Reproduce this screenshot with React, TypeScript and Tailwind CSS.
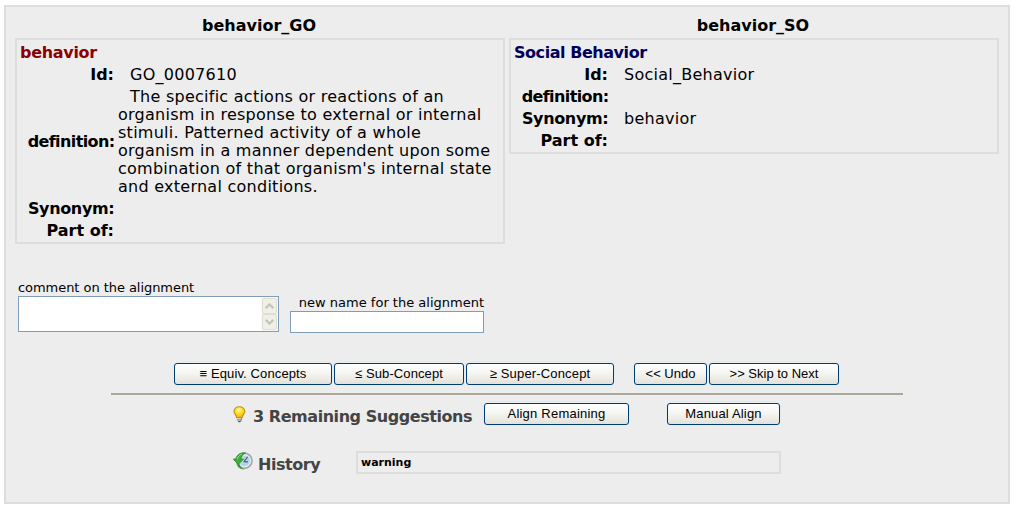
import type { ReactNode } from "react";

function Row({ label, tracking = "", children }: { label: string; tracking?: string; children?: ReactNode }) {
  return (
    <>
      <dt className={"self-center text-right font-bold " + tracking}>{label}</dt>
      <dd className="indent-3 tracking-[0.26px]">{children}</dd>
    </>
  );
}

function Concept({ ontology, title, color, children }: { ontology: string; title: string; color: string; children: ReactNode }) {
  return (
    <section className="w-[490px]">
      <h2 className="mb-[3px] pr-0.5 text-center font-bold">{ontology}</h2>
      <div className="border-2 border-[#dddddd] px-[3px] pb-0.5 pt-1">
        <h3 className={"mb-1 font-bold " + color}>{title}</h3>
        <dl className="grid grid-cols-[94px_1fr] gap-1">{children}</dl>
      </div>
    </section>
  );
}

function XpButton({ className, children }: { className: string; children: ReactNode }) {
  return (
    <button
      className={
        "h-[22px] shrink-0 whitespace-pre rounded-[3px] border border-[#003c74] bg-linear-to-b from-white via-[#f4f4f0] to-[#e3e1d8] pb-px text-center font-['Liberation_Sans',sans-serif] text-[13px] leading-[19px] text-black shadow-[0_0_1px_1px_#e2edf2] " +
        className
      }
    >
      {children}
    </button>
  );
}

function ScrollArrow({ up }: { up?: boolean }) {
  return (
    <span className="flex h-[16px] w-[15px] items-center justify-center rounded-[2px] border border-[#dfded3] bg-[#f1f0e8]">
      <svg width="9" height="6" viewBox="0 0 9 6" fill="none" stroke="#c5c4b8" strokeWidth="2.2">
        <path d={up ? "M.7 5.2 4.5 1.4 8.3 5.2" : "M.7.8 4.5 4.6 8.3.8"} />
      </svg>
    </span>
  );
}

function Bulb() {
  return (
    <svg width="13" height="17" viewBox="0 0 13 17">
      <defs>
        <radialGradient id="glass" cx=".45" cy=".3" r=".65">
          <stop offset="0" stopColor="#fffbc4" />
          <stop offset=".5" stopColor="#ffe21c" />
          <stop offset="1" stopColor="#f5b60c" />
        </radialGradient>
      </defs>
      <path d="M6.400.8C3.200.8 1 2.800 1 5.400c0 2.200 2.300 3.300 2.600 6.200h5.600c.3-2.900 2.600-4 2.600-6.200C11.800 2.800 9.600.8 6.400.8Z" fill="url(#glass)" stroke="#cf8a1c" strokeWidth="1.100" />
      <path d="M3.900 11.900h5v2.600l-1.300 1.300H5.200l-1.300-1.300Z" fill="#8c8c84" />
      <path d="M3.900 12.500h4M4 14.100h3.600" stroke="#e6e6df" strokeWidth=".8" />
      <path d="M5.300 15.700h2.200" stroke="#44443f" />
    </svg>
  );
}

function HistoryIcon() {
  return (
    <svg width="20" height="18" viewBox="0 0 20 18">
      <circle cx="11.500" cy="8.800" r="7.600" fill="#c8dce8" stroke="#a3a9ad" strokeWidth="1.600" />
      <circle cx="11.500" cy="8.800" r="5.900" fill="#b3d3e6" stroke="#eef4f7" strokeWidth=".9" />
      <path d="M11 9.500 14.700 4.800M10.600 9.700l4.400.1" stroke="#4e5f6b" strokeWidth="1.200" />
      <path d="M12.500.9C7.400.3 3.800 2.700 2.900 7H.3l4.900 5.600L10.400 7H7.700C8.100 4.400 9.700 2.500 12.500.9Z" fill="#3fae39" stroke="#24842a" strokeWidth=".8" />
      <path d="M3.300 11.200c1 4 4.100 6.400 8.200 6.200-3-1.100-4.600-3-5-5.600l-1.400 1.200Z" fill="#3b9a36" />
      <path d="M4.300 7.300c.6-2.800 2-4.400 4.600-5.200" stroke="#9be08d" fill="none" />
    </svg>
  );
}

export default function App() {
  return (
    <div className="h-[510px] w-[1028px] bg-white pl-1 pt-[5px] font-['DejaVu_Sans',Verdana,sans-serif] text-[16px] leading-[18px] text-black">
      <main className="h-[499px] w-[1006px] border-2 border-[#dddddd] bg-[#ededed]">
        <div className="flex h-[229px] items-start gap-1 pl-[9px] pt-2.5">
          <Concept ontology="behavior_GO" title="behavior" color="text-[#8b0000] tracking-[-0.3px]">
            <Row label="Id:">GO_0007610</Row>
            <Row label="definition:" tracking="tracking-[-0.6px] -mr-[0.6px]">
              The specific actions or reactions of an<br />
              organism in response to external or internal<br />
              stimuli. Patterned activity of a whole<br />
              organism in a manner dependent upon some<br />
              combination of that organism's internal state<br />
              and external conditions.
            </Row>
            <Row label="Synonym:" tracking="tracking-[-0.35px] -mr-[0.35px]" />
            <Row label="Part of:" />
          </Concept>
          <Concept ontology="behavior_SO" title="Social Behavior" color="text-[#00005c] tracking-[-0.45px]">
            <Row label="Id:">Social_Behavior</Row>
            <Row label="definition:" tracking="tracking-[-0.6px] -mr-[0.6px]" />
            <Row label="Synonym:" tracking="tracking-[-0.35px] -mr-[0.35px]">behavior</Row>
            <Row label="Part of:" />
          </Concept>
        </div>

        <div className="mt-11 flex pl-3 text-[13px] leading-4">
          <div className="w-[261px]">
            <div className="tracking-[-0.05px]">comment on the alignment</div>
            <div className="flex h-9 justify-end border border-[#7f9db9] bg-white">
              <div className="flex w-[17px] flex-col items-center justify-between bg-[#f8f8f4] py-px">
                <ScrollArrow up />
                <ScrollArrow />
              </div>
            </div>
          </div>
          <div className="ml-[11px] mt-[15px] w-[194px]">
            <div className="text-right">new name for the alignment</div>
            <div className="h-[22px] border border-[#7f9db9] bg-white" />
          </div>
        </div>

        <div className="mt-[30px] flex gap-0.5 pl-[168px]">
          <XpButton className="w-[158px] tracking-[0.12px]">≡ Equiv. Concepts</XpButton>
          <XpButton className="w-[130px] tracking-[0.1px]">≤ Sub-Concept</XpButton>
          <XpButton className="w-[148px] tracking-[0.16px]">≥ Super-Concept</XpButton>
          <XpButton className="ml-[18px] w-[73px]">&lt;&lt; Undo</XpButton>
          <XpButton className="w-[130px]">&gt;&gt; Skip to Next</XpButton>
        </div>

        <hr className="ml-[105px] mt-2 w-[792px] border-0 border-t-2 border-[#aca899]" />

        <div className="mt-2 flex pl-[227px]">
          <div className="mt-[3px] w-5"><Bulb /></div>
          <div className="mt-[5px] w-[231px] whitespace-nowrap font-bold tracking-[-0.45px] text-[#444444]">3 Remaining Suggestions</div>
          <XpButton className="w-[145px] tracking-[0.22px]">Align Remaining</XpButton>
          <XpButton className="ml-[38px] w-[113px] tracking-[0.16px]">Manual Align</XpButton>
        </div>

        <div className="mt-[25px] flex pl-[227px]">
          <div className="mt-px w-[25px]"><HistoryIcon /></div>
          <div className="mt-[5px] w-[98px] font-bold tracking-[-0.45px] text-[#444444]">History</div>
          <div className="h-[23px] w-[425px] border-2 border-[#dddddd] pl-[3px] text-[11px] font-bold leading-[20px]">warning</div>
        </div>
      </main>
    </div>
  );
}
